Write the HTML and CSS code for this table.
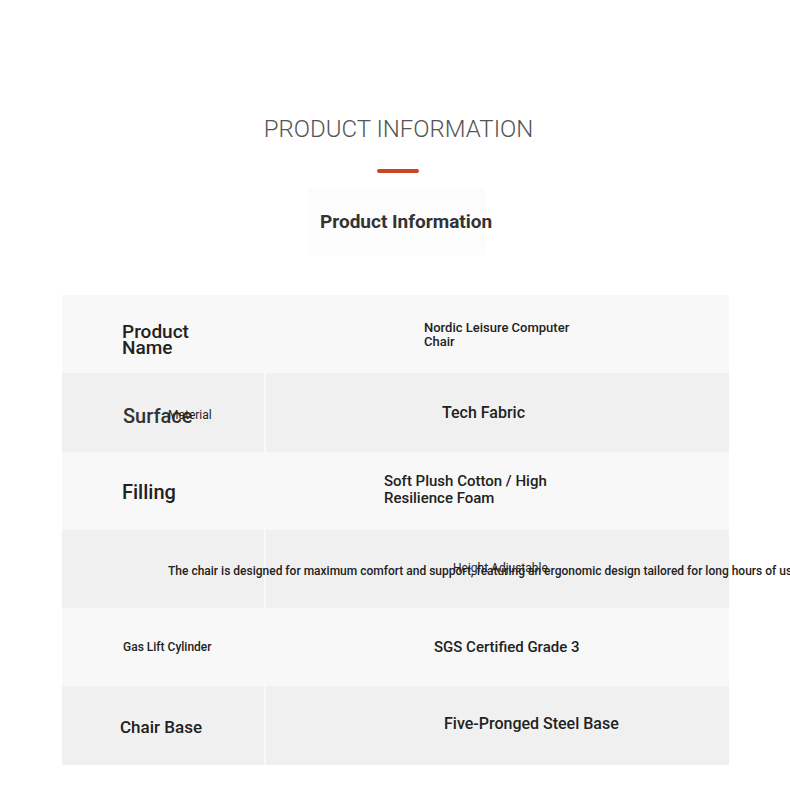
FILE: index.html
```html
<!DOCTYPE html>
<html lang="en">
<head>
<meta charset="utf-8">
<title>Product Information</title>
<link rel="stylesheet" href="styles.css">
</head>
<body>
<section class="info">
  <h1 class="title">PRODUCT INFORMATION</h1>
  <div class="accent"></div>
  <div class="subtitle-box"><h2 class="subtitle">Product Information</h2></div>
  <div class="spec">
    <div class="row odd">
      <div class="key k1"><span class="chip">Product<br>Name</span></div>
      <div class="val v1"><span class="chip">Nordic Leisure Computer<br>Chair</span></div>
    </div>
    <div class="row even">
      <div class="key k2"><span class="chip surface">Surface</span><span class="material">Material</span></div>
      <div class="val v2"><span class="chip">Tech Fabric</span></div>
    </div>
    <div class="row odd">
      <div class="key k3"><span class="chip">Filling</span></div>
      <div class="val v3"><span class="chip">Soft Plush Cotton / High<br>Resilience Foam</span></div>
    </div>
    <div class="row even">
      <div class="key k4"><span class="long">The chair is designed for maximum comfort and support, featuring an ergonomic design tailored for long hours of use.</span></div>
      <div class="val v4"><span class="chip">Height Adjustable</span></div>
    </div>
    <div class="row odd">
      <div class="key k5"><span class="chip">Gas Lift Cylinder</span></div>
      <div class="val v5"><span class="chip">SGS Certified Grade 3</span></div>
    </div>
    <div class="row even">
      <div class="key k6"><span class="chip">Chair Base</span></div>
      <div class="val v6"><span class="chip">Five-Pronged Steel Base</span></div>
    </div>
  </div>
</section>
</body>
</html>
```
FILE: styles.css
```css
html, body {
  margin: 0;
  padding: 0;
  overflow: hidden;
  background: #ffffff;
}
* { box-sizing: border-box; }
body {
  font-family: Roboto, "Liberation Sans", sans-serif;
  color: #222;
}
.info {
  padding-top: 114px;
  display: flex;
  flex-direction: column;
  align-items: center;
}
.title {
  margin: 0 0 0 7px;
  font-family: Roboto, "Liberation Sans", sans-serif;
  font-weight: 300;
  font-size: 24px;
  line-height: 30px;
  color: #555;
}
.accent {
  margin-top: 25px;
  margin-left: 6px;
  width: 42px;
  height: 4px;
  border-radius: 2px;
  background: #c9461f;
}
.subtitle-box {
  margin-top: 15px;
  margin-left: 3px;
  width: 177px;
  height: 67px;
  padding-left: 12px;
  background: #fcfcfc;
  display: flex;
  align-items: center;
  white-space: nowrap;
}
.subtitle {
  margin: 0;
  font-size: 19px;
  font-weight: 700;
  color: #333;
}
.spec {
  margin-top: 40px;
  width: 667px;
  margin-left: 1px;
}
.row {
  display: flex;
  height: 78.3px;
}
.row.odd { background: #f8f8f8; }
.row.even { background: #f0f0f0; }
.key {
  flex: 0 0 204px;
  min-width: 0;
  border-right: 2px solid #f9f9f9;
  display: flex;
  align-items: center;
  white-space: nowrap;
  position: relative;
}
.val {
  flex: 1 1 auto;
  min-width: 0;
  display: flex;
  align-items: center;
  white-space: nowrap;
}
.chip {
  background: rgba(255,255,255,0.12);
}
.k1 { padding-left: 60px; padding-top: 12px; font-size: 19px; line-height: 16px; font-weight: 500; }
.v1 { padding-left: 158px; padding-top: 2px; font-size: 13px; line-height: 14px; font-weight: 500; }
.k2 { padding-left: 61px; padding-top: 8px; font-size: 20px; font-weight: 500; color: #333; }
.material {
  position: absolute;
  left: 106px;
  top: 35px;
  font-size: 12px;
  font-weight: 400;
  color: #222;
}
.v2 { padding-left: 176px; padding-bottom: 0; font-size: 16px; font-weight: 500; }
.k3 { padding-left: 60px; padding-top: 2px; font-size: 20px; font-weight: 500; }
.v3 { padding-left: 118px; padding-bottom: 2px; font-size: 15px; line-height: 16.5px; font-weight: 500; }
.k4 { padding-left: 106px; padding-top: 4px; font-size: 12px; font-weight: 500; }
.v4 { padding-left: 187px; padding-bottom: 3px; font-size: 12px; font-weight: 400; }
.k5 { padding-left: 61px; padding-top: 0; font-size: 12px; font-weight: 500; }
.v5 { padding-left: 168px; padding-bottom: 0; font-size: 15px; font-weight: 500; }
.k6 { padding-left: 58px; padding-top: 2px; font-size: 17px; font-weight: 500; }
.v6 { padding-left: 178px; padding-bottom: 4px; font-size: 16px; font-weight: 500; }
```
